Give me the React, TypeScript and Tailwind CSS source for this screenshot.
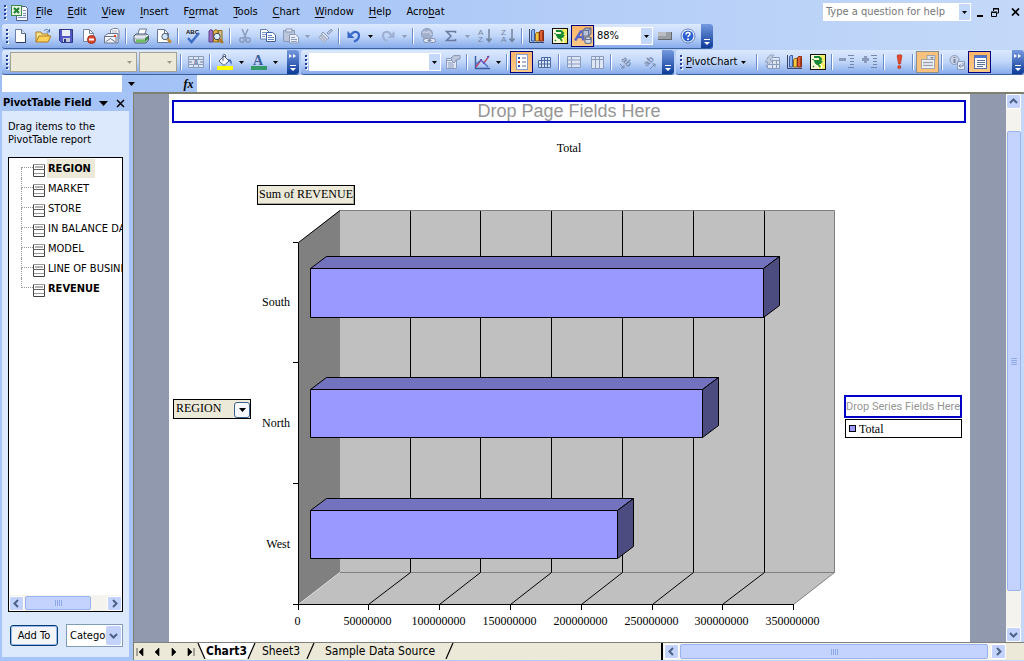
import type { ReactNode } from "react";
import clsx from "clsx";

/* ---------- small pieces ---------- */

function Svg({ children, size = 16 }: { children: ReactNode; size?: number }) {
  return (
    <svg width={size} height={size} viewBox="0 0 16 16" fill="none" aria-hidden="true">
      {children}
    </svg>
  );
}

function Caret({ className }: { className?: string }) {
  return (
    <svg width="5" height="3" viewBox="0 0 5 3" className={clsx("shrink-0", className)} aria-hidden="true">
      <path d="M0 0h5L2.5 3z" fill="currentColor" />
    </svg>
  );
}

function Chevron({ dir }: { dir: "up" | "down" | "left" | "right" }) {
  const paths = {
    up: "M1 6l3.500-3.500L8 6",
    down: "M1 3l3.500 3.500L8 3",
    left: "M6 1L2.500 4.500 6 8",
    right: "M3 1l3.500 3.500L3 8",
  };
  return (
    <svg width="9" height="9" viewBox="0 0 9 9" fill="none" aria-hidden="true">
      <path d={paths[dir]} stroke="#4d6185" strokeWidth="2" />
    </svg>
  );
}

function Grip() {
  return (
    <svg width="6" height="17" viewBox="0 0 6 17" className="ml-1 shrink-0" aria-hidden="true">
      {[1, 5, 9, 13].map((y) => (
        <g key={y}>
          <rect x="1" y={y + 1} width="2" height="2" fill="#fff" />
          <rect x="0" y={y} width="2" height="2" fill="#27419a" />
        </g>
      ))}
    </svg>
  );
}

function Sep() {
  return (
    <div className="flex w-1.5 shrink-0 justify-center">
      <div className="h-4 w-px bg-[#6a8ccb]" />
      <div className="h-4 w-px bg-white" />
    </div>
  );
}

function Tool({ label, active, soft, children }: { label: string; active?: boolean; soft?: boolean; children: ReactNode }) {
  return (
    <button
      aria-label={label}
      className={clsx(
        "flex h-[22px] w-[23px] shrink-0 items-center justify-center",
        active && "border border-[#000080] bg-linear-to-b from-[#fdb469] to-[#fdcb88]",
        soft && "border border-[#8d8d8d] bg-[#f8c27c]"
      )}
    >
      {children}
    </button>
  );
}

function Drop({ label, off }: { label: string; off?: boolean }) {
  return (
    <button
      aria-label={label}
      className={clsx("flex h-[22px] w-[11px] shrink-0 items-center justify-center", off ? "text-[#8d9bb8]" : "text-black")}
    >
      <Caret />
    </button>
  );
}

function Cap({ more }: { more?: boolean }) {
  return (
    <button
      aria-label="Toolbar options"
      className="flex h-full w-3 shrink-0 flex-col items-center justify-end rounded-r-[3px] bg-linear-to-b from-[#7599e0] to-[#0b3a97] pb-0.5"
    >
      <svg width="8" height="18" viewBox="0 0 8 18" aria-hidden="true">
        {more && <path d="M0 0l3 2-3 2zM4 0l3 2-3 2z" fill="#fff" />}
        <path d="M1 11h6v1H1zM1 14h6l-3 3z" fill="#fff" />
      </svg>
    </button>
  );
}

function Bar({ label, grow, children, more }: { label: string; grow?: boolean; children: ReactNode; more?: boolean }) {
  return (
    <div
      role="toolbar"
      aria-label={label}
      className={clsx(
        "flex h-[25px] items-center rounded-[3px] border-b border-[#3b619c] bg-linear-to-b from-[#dce9fe] via-[#c0d6f9] to-[#86aaea]",
        grow ? "min-w-0 flex-1" : "shrink-0"
      )}
    >
      <Grip />
      {children}
      <div className="flex-1" />
      <Cap more={more} />
    </div>
  );
}

function ScrollButton({ dir }: { dir: "up" | "down" | "left" | "right" }) {
  return (
    <button
      aria-label={`Scroll ${dir}`}
      className="flex size-[15px] shrink-0 items-center justify-center rounded-xs border border-white bg-[#c3d3fd]"
    >
      <Chevron dir={dir} />
    </button>
  );
}

function ThumbLines() {
  return (
    <div className="flex gap-px">
      {[0, 1, 2, 3].map((i) => (
        <div key={i} className="h-1.5 w-px bg-[#8faae8]" />
      ))}
    </div>
  );
}

/* ---------- toolbar icons ---------- */

const G = "#8b9bbd";

const NewIcon = () => (
  <Svg>
    <path d="M3.500 1.500h6l4 4v9h-10z" fill="#fff" stroke="#6b7ea8" />
    <path d="M13.500 6v8.500H4" stroke="#2d3e66" />
    <path d="M9.500 1.500v4h4" fill="#d7e3f8" stroke="#5a6c94" />
  </Svg>
);
const OpenIcon = () => (
  <Svg>
    <path d="M1 14V4h5l1 2h6v3" fill="#fbe48e" stroke="#ad7a1c" />
    <path d="M1 14l3-6h12l-3 6z" fill="#ffd158" stroke="#ad7a1c" />
    <path d="M9 3c2-2.500 4-2 5 .5M14.500 1v3h-3" stroke="#476fae" />
  </Svg>
);
const SaveIcon = () => (
  <Svg>
    <path d="M1.500 1.500h13v13h-11l-2-2z" fill="#5258c4" stroke="#2f378c" />
    <rect x="4" y="2" width="8" height="6" fill="#e9edf8" />
    <rect x="5" y="10" width="7" height="4" fill="#c7cbd9" />
    <rect x="6" y="11" width="2" height="3" fill="#27307e" />
  </Svg>
);
const PermissionIcon = () => (
  <Svg>
    <path d="M2.500 1.500h6l4 4v8h-10z" fill="#fff" stroke="#7585a9" />
    <path d="M8.500 1.500v4h4" stroke="#7585a9" />
    <circle cx="10.500" cy="11.500" r="4" fill="#d9472b" stroke="#a62c17" />
    <path d="M8 11.500h5" stroke="#fff" strokeWidth="2" />
  </Svg>
);
const MailIcon = () => (
  <Svg>
    <path d="M6.500 6V2l3-1.500h4l1.500 2V11" fill="#fff" stroke="#77839e" />
    <path d="M8 3h5M8 5h5" stroke="#a9b4cb" />
    <path d="M.5 8L4 5.500h10V15H.5z" fill="#f3f5fb" stroke="#6a7793" />
    <path d="M.5 8.500h11.500V15M1.500 14l5-3.500 5 3.500" stroke="#6a7793" />
    <rect x="10" y="7" width="2" height="2" fill="#d9472b" />
  </Svg>
);
const PrintIcon = () => (
  <Svg>
    <path d="M4.500 7l2-6h7l-2 6z" fill="#fff" stroke="#66789b" />
    <path d="M1 8l2-2h11l1.500 2v4L13 15H2l-1-2z" fill="#c5cbd7" stroke="#4b5872" />
    <path d="M1.500 9h11l2.500-2" stroke="#fff" />
    <path d="M3 11.500h9v3H3z" fill="#6dbf5f" />
    <path d="M12 10l3-2v3l-3 3z" fill="#3f8e46" />
  </Svg>
);
const PreviewIcon = () => (
  <Svg>
    <path d="M1.500 1.500h7l4 4v9h-11z" fill="#fff" stroke="#66789b" />
    <path d="M8.500 1.500v4h4" stroke="#66789b" />
    <circle cx="9" cy="8.500" r="3.200" fill="#cfe3fa" stroke="#565f73" />
    <path d="M11.500 11l3.500 3.500" stroke="#c28a34" strokeWidth="2.500" />
  </Svg>
);
const SpellIcon = () => (
  <Svg>
    <text x="1" y="6" fontSize="6" fontFamily="Liberation Sans, sans-serif" fontWeight="700" fill="#111">ABC</text>
    <path d="M3 10l3.500 4L14 5" stroke="#3f6fc4" strokeWidth="2.500" />
  </Svg>
);
const ResearchIcon = () => (
  <Svg>
    <path d="M1 3l2-1.500L5 3v11H1z" fill="#9a6fc0" stroke="#5f3f8a" />
    <path d="M5.500 3L8 1.500 10 3v11H5.500z" fill="#e3b750" stroke="#8d6a1d" />
    <path d="M10.500 2.500H14V14h-3.500z" fill="#d6c08d" stroke="#8d6a1d" />
    <circle cx="9" cy="8.500" r="3.200" fill="#dcecfb" stroke="#3b4a66" />
    <path d="M11.500 11l3.500 4" stroke="#b5741f" strokeWidth="2" />
  </Svg>
);
const CutIcon = () => (
  <Svg>
    <path d="M5 1l4 9M11 1l-4 9" stroke={G} strokeWidth="1.500" />
    <circle cx="5" cy="12" r="2.200" stroke={G} strokeWidth="1.500" />
    <circle cx="11" cy="12" r="2.200" stroke={G} strokeWidth="1.500" />
  </Svg>
);
const CopyIcon = () => (
  <Svg>
    <path d="M.5 1.500h6l2.500 2.500v7H.5z" fill="#fff" stroke="#5f7cb5" />
    <path d="M2 4.500h4M2 6.500h4M2 8.500h3" stroke="#7d98cb" />
    <path d="M6.500 4.500h6L15.500 7v6.500h-9z" fill="#fff" stroke="#3c5fa4" />
    <path d="M8 7.500h4M8 9.500h6M8 11.500h6" stroke="#6384c2" />
  </Svg>
);
const PasteIcon = () => (
  <Svg>
    <path d="M.5 2.500h11v11H.5z" fill="#bcc6da" stroke={G} />
    <rect x="3" y="1" width="6" height="3" fill="#dfe5f1" stroke={G} />
    <path d="M6.500 6.500h6l3 2.500v6h-9z" fill="#e9eef8" stroke={G} />
    <path d="M8 9.500h4M8 11.500h6M8 13.500h6" stroke={G} />
  </Svg>
);
const PainterIcon = () => (
  <Svg>
    <path d="M10 5l4-4 1.500 1.500-4 4z" fill="#b4bfd5" stroke={G} />
    <path d="M6 4l6 6-1.500 1.500L4.500 6z" fill="#dbe2ef" stroke={G} />
    <path d="M4.500 6L1 9.500 7 15l3.500-3.500z" fill="#a9b4ca" />
    <path d="M3 9l4 4M5 8l4 4" stroke="#d3dbea" />
  </Svg>
);
const UndoIcon = () => (
  <Svg>
    <path d="M5 6.500c3-4 8-3 8 1 0 3-2 5-5 6" stroke="#3668c9" strokeWidth="2.200" />
    <path d="M1.500 3v7h7z" fill="#3668c9" />
  </Svg>
);
const RedoIcon = () => (
  <Svg>
    <path d="M11 6.500c-3-4-8-3-8 1 0 3 1.500 4.500 4 5.500" stroke="#9fb0d2" strokeWidth="2.200" />
    <path d="M14.500 3v7h-7z" fill="#9fb0d2" />
  </Svg>
);
const LinkIcon = () => (
  <Svg>
    <circle cx="7" cy="6" r="5.500" fill="#a3b0cc" stroke={G} />
    <path d="M3 5c2-3 3 1 5-1s2 4 4 2" stroke="#c9d2e4" strokeWidth="1.500" />
    <rect x="3.500" y="10.500" width="6" height="4" rx="2" fill="#dde5f3" stroke="#7e8cab" />
    <rect x="9.500" y="10.500" width="6" height="4" rx="2" fill="#dde5f3" stroke="#7e8cab" />
    <path d="M7.500 12.500h4" stroke="#7e8cab" />
  </Svg>
);
const SumIcon = () => (
  <Svg>
    <path d="M12.500 5V3.500h-9L8 8l-4.500 4.500h9V11" stroke="#68789f" strokeWidth="1.500" />
  </Svg>
);
const SortIcon = ({ top, bottom }: { top: string; bottom: string }) => (
  <Svg>
    <text x="1" y="7" fontSize="8" fontFamily="Liberation Sans, sans-serif" fill="#74849f">{top}</text>
    <text x="1" y="14" fontSize="8" fontFamily="Liberation Sans, sans-serif" fill="#74849f">{bottom}</text>
    <path d="M12 1v12M9.500 10.500L12 13.500l2.500-3" stroke="#74849f" strokeWidth="1.500" />
  </Svg>
);
const ChartIcon = () => (
  <Svg>
    <path d="M.5 1v13.500H15" stroke="#3a4668" />
    <path d="M2.500 3l1-1.500h2V13h-3z" fill="#8fb4f0" stroke="#3a5fa8" />
    <path d="M6.500 6l1-1.500H10V13H6.500z" fill="#f7c640" stroke="#94691a" />
    <path d="M10.500 4l1-1.500h3V13h-4z" fill="#e0603a" stroke="#8a2c12" />
    <path d="M13.500 4v9" stroke="#a33b1c" />
  </Svg>
);
const MapIcon = () => (
  <Svg>
    <rect x=".5" y=".5" width="15" height="15" fill="#fbfbd8" stroke="#111" />
    <path d="M10 1h5v14H9l-1-5z" fill="#f4ee62" />
    <path d="M10 10l2 2-1 3M13 8l2 1" stroke="#fff" />
    <path d="M4 3h5l2 2-2 2H5l1 2h4l2-2" stroke="#148a35" strokeWidth="2" />
    <path d="M7 10v1M3 5v1M8 10l2 3M3 13l1-1" stroke="#148a35" strokeWidth="1.500" />
  </Svg>
);
const DrawingIcon = () => (
  <Svg size={18}>
    <path d="M1 12l5-8h2l0 8M3 9h5" stroke="#5b67c8" strokeWidth="2.200" />
    <path d="M8 3l2-2h5v5l-2 2H8z" fill="#b9c4dc" stroke="#65708f" />
    <path d="M8 3h5v5M13 3l2-2" stroke="#65708f" />
    <ellipse cx="12.500" cy="10" rx="2.800" ry="1.200" fill="#eef1f7" stroke="#65708f" />
    <path d="M9.700 10v3.500c0 1.500 5.600 1.500 5.600 0V10c0 1.500-5.600 1.500-5.600 0z" fill="#d4d9e6" stroke="#65708f" />
  </Svg>
);
const GrayRectIcon = () => (
  <svg width="14" height="8" viewBox="0 0 14 8" aria-hidden="true">
    <rect width="14" height="8" fill="#63676e" />
    <rect width="13" height="7" fill="#9a9ea5" />
    <rect width="8" height="4" fill="#b9bcc2" />
  </svg>
);
const HelpIcon = () => (
  <Svg>
    <circle cx="8" cy="8" r="7" fill="#fff" stroke="#5f7fc4" />
    <circle cx="8" cy="8" r="5.500" fill="#2e62d3" />
    <path d="M6 6.500c0-3 4-2.500 4-.5 0 1.500-2 1.500-2 3" stroke="#fff" strokeWidth="1.500" />
    <rect x="7" y="10.500" width="2" height="1.500" fill="#fff" />
  </Svg>
);
const MergeIcon = () => (
  <Svg>
    <path d="M.5 2.500h15v11H.5zM.5 5.500h15M.5 10.500h15M5.500 2.500v3M10.500 2.500v3M5.500 10.500v3M10.500 10.500v3" fill="#dfe6f3" stroke={G} />
    <text x="6" y="10" fontSize="7" fontFamily="Liberation Sans, sans-serif" fontWeight="700" fill="#68789f">a</text>
    <path d="M1 8h3M12 8h3" stroke="#68789f" />
  </Svg>
);
const FillIcon = () => (
  <Svg>
    <path d="M7 2l5 5-5 4.500L2 7z" fill="#f5f8fd" stroke="#4d5c7b" />
    <path d="M6 7V1.500c0-1.500 2.500-1.500 2.500 0V4" stroke="#4d5c7b" />
    <path d="M11 5c4 0 4 3 3.500 6-1-2-1-3-3-4" fill="#3d66bb" />
    <rect x="0" y="12" width="16" height="4" fill="#ffff00" />
  </Svg>
);
const FontColorIcon = () => (
  <Svg>
    <text x="2" y="11" fontSize="14" fontFamily="Liberation Serif, serif" fontWeight="700" fill="#3d5c9c">A</text>
    <rect x="0" y="12" width="16" height="4" fill="#339966" />
  </Svg>
);
const PropsIcon = () => (
  <Svg>
    <path d="M1.500 4.500h10v10h-10z" fill="#e1e8f4" stroke={G} />
    <path d="M1.500 6.500h10M3 9h5M3 11h6M3 13h6" stroke={G} />
    <path d="M6 4l3-2.500h6V5l-4 1-2 3-2-2z" fill="#bcc7db" stroke={G} />
  </Svg>
);
const LineTypeIcon = () => (
  <Svg>
    <path d="M1.500 2v12.500H16" stroke="#3a5ca4" strokeWidth="1.400" />
    <path d="M2 13l5-7 3 3 5-7" stroke="#c23b5e" strokeWidth="1.300" />
    <path d="M2 10l5-4 3 3 4 4" stroke="#4a70c9" strokeWidth="1.300" />
    <path d="M6 5h2v2H6zM9 8h2v2H9zM13 2h2v2h-2z" fill="#6a56c8" />
  </Svg>
);
const LegendIcon = () => (
  <Svg>
    <rect x="2.500" y=".5" width="11" height="15" fill="#fff" stroke="#8ba0cc" />
    <rect x="4" y="3" width="2" height="2" fill="#3158c4" />
    <rect x="4" y="7" width="2" height="2" fill="#c8372a" />
    <rect x="4" y="11" width="2" height="2" fill="#3158c4" />
    <path d="M8 4h4M8 8h4M8 12h4" stroke="#5a6d97" />
  </Svg>
);
const TableIcon = () => (
  <Svg>
    <path d="M4.500 3.500h9v10h-12v-7h12M1.500 10h12M4.500 3.500v10M7.500 3.500v10M10.500 3.500v10" fill="#dbe7fb" stroke="#4b68a6" />
  </Svg>
);
const RowsIcon = () => (
  <Svg>
    <path d="M1.500 2.500h13v11h-13zM1.500 6h13M1.500 10h13M5.500 2.500v11" fill="#dfe6f3" stroke={G} />
  </Svg>
);
const ColsIcon = () => (
  <Svg>
    <path d="M2.500 2.500h12v12h-12zM2.500 5.500h12M6.500 2.500v12M10.500 2.500v12" fill="#dfe6f3" stroke={G} />
  </Svg>
);
const AngleIcon = ({ up }: { up?: boolean }) => (
  <Svg>
    <g transform={up ? "rotate(-45 8 8)" : "rotate(45 8 8)"}>
      <text x="3" y="10" fontSize="9" fontFamily="Liberation Sans, sans-serif" fontWeight="700" fill="#7b8bad">ab</text>
    </g>
    <path d={up ? "M9 15l5-5M11 10h3v3" : "M2 10l4 4M6 11v3H3"} stroke="#7b8bad" />
  </Svg>
);
const FieldListIcon = () => (
  <Svg>
    <path d="M3.500 3.500h12v11h-12zM3.500 6.500h12M3.500 10.500h12M8.500 6.500v8M12.500 6.500v8" fill="#dfe6f3" stroke={G} />
    <path d="M6 1l4 0-4 5h3l-7 7 2-5H1z" fill="#c3cde0" stroke={G} strokeWidth=".8" />
  </Svg>
);
const HideDetailIcon = ({ plus }: { plus?: boolean }) => (
  <Svg>
    <path d="M9 1.500h6M11 4.500h4M11 7.500h4M11 10.500h4M9 13.500h6" stroke="#7686a8" />
    <path d="M0 4h7v3H0z" fill="#8b9bbd" />
    {plus && <path d="M2 2h3v7H2z" fill="#8b9bbd" />}
  </Svg>
);
const RefreshIcon = () => (
  <Svg>
    <path d="M6 1.500c1-1 4-1 5 0L9.500 10h-2z" fill="#e3482b" stroke="#a9301b" strokeWidth=".6" />
    <circle cx="8.300" cy="13" r="1.600" fill="#e3482b" stroke="#a9301b" strokeWidth=".6" />
  </Svg>
);
const HiddenItemsIcon = () => (
  <Svg>
    <path d="M1.500 5.500h13v9h-13z" fill="#f6f6f8" stroke="#9aa0ac" />
    <path d="M7 1.500h8v4H7z" fill="#dfe3ea" stroke="#9aa0ac" />
    <path d="M10 3h4l-2 2z" fill="#7c8598" />
    <path d="M3 8.500h10M3 11.500h10" stroke="#9aa3b6" strokeWidth="1.500" />
  </Svg>
);
const AlwaysIcon = () => (
  <Svg>
    <circle cx="5.500" cy="6" r="4.500" fill="#cbd4e6" stroke={G} />
    <path d="M5.500 5v4M5.500 3v1" stroke="#7686a8" strokeWidth="2" />
    <path d="M8.500 7.500h7v8h-7z" fill="#dfe6f3" stroke={G} />
    <path d="M14 9v3h-4M11.500 10.500L10 12l1.500 1.500" stroke="#7686a8" />
  </Svg>
);
const ListIcon = () => (
  <Svg>
    <rect x="2.500" y="1.500" width="12" height="13" fill="#fff" stroke="#5a6fa8" />
    <rect x="3" y="2" width="11" height="2" fill="#4a74cf" />
    <path d="M5 6.500h8M5 8.500h8M5 10.500h8M5 12.500h6" stroke="#5d6f9b" />
  </Svg>
);
const ExcelIcon = () => (
  <svg width="18" height="17" viewBox="0 0 18 17" className="ml-px" aria-hidden="true">
    <path d="M5.500 2.500h9l2 2v12h-11z" fill="#f4f7fd" stroke="#4f5f8a" />
    <path d="M7 13.500h8M12 6.500h3M12 9.500h3M12 11.500h3" stroke="#7b8fbc" />
    <rect x=".5" y="1.500" width="10" height="10" fill="#e4f3e2" stroke="#3f8a46" />
    <path d="M3 4l5 5M8 4L3 9" stroke="#1f7f2e" strokeWidth="2" />
  </svg>
);

/* ---------- menu ---------- */

// the middle part is the underlined access key
const MENUS = [
  ["", "F", "ile"],
  ["", "E", "dit"],
  ["", "V", "iew"],
  ["", "I", "nsert"],
  ["F", "o", "rmat"],
  ["", "T", "ools"],
  ["", "C", "hart"],
  ["", "W", "indow"],
  ["", "H", "elp"],
  ["Acro", "b", "at"],
];

function MenuBar() {
  return (
    <div className="flex h-6 items-center">
      <Grip />
      <ExcelIcon />
      <nav className="flex flex-1 gap-[15px] pl-[7px]">
        {MENUS.map(([pre, key, post]) => (
          <button key={pre + key + post} className="whitespace-nowrap">
            {pre}
            <span className="underline underline-offset-2">{key}</span>
            {post}
          </button>
        ))}
      </nav>
      <div className="flex h-[18px] w-[148px] items-center bg-white">
        <input
          aria-label="Type a question for help"
          placeholder="Type a question for help"
          className="min-w-0 flex-1 pl-[3px] text-[11px] outline-none placeholder:text-[#777]"
        />
        <button aria-label="Help history" className="mr-px flex h-4 w-[11px] items-center justify-center bg-[#c3d8fb]">
          <Caret />
        </button>
      </div>
      <div className="flex items-center gap-2 pr-1 pl-1.5">
        <button aria-label="Minimize">
          <svg width="6" height="10" viewBox="0 0 6 10"><path d="M0 8h6v2H0z" fill="#000" /></svg>
        </button>
        <button aria-label="Restore">
          <svg width="8" height="9" viewBox="0 0 8 9">
            <path d="M2.500 3V1h5v4H6M2 .500h6M.500 4.500h5v4h-5zM0 4h6" fill="none" stroke="#000" />
          </svg>
        </button>
        <button aria-label="Close" className="pl-1">
          <svg width="9" height="8" viewBox="0 0 9 8">
            <path d="M1 .5l7 7M8 .5l-7 7" stroke="#000" strokeWidth="1.700" />
          </svg>
        </button>
      </div>
    </div>
  );
}

/* ---------- toolbars ---------- */

function StandardBar() {
  return (
    <div className="flex px-0.5">
      <Bar label="Standard">
        <div className="mr-[-4px]" />
        <Tool label="New"><NewIcon /></Tool>
        <Tool label="Open"><OpenIcon /></Tool>
        <Tool label="Save"><SaveIcon /></Tool>
        <Tool label="Permission"><PermissionIcon /></Tool>
        <Tool label="E-mail"><MailIcon /></Tool>
        <Sep />
        <Tool label="Print"><PrintIcon /></Tool>
        <Tool label="Print preview"><PreviewIcon /></Tool>
        <Sep />
        <Tool label="Spelling"><SpellIcon /></Tool>
        <Tool label="Research"><ResearchIcon /></Tool>
        <Sep />
        <Tool label="Cut"><CutIcon /></Tool>
        <Tool label="Copy"><CopyIcon /></Tool>
        <Tool label="Paste"><PasteIcon /></Tool>
        <Drop label="Paste options" off />
        <Tool label="Format painter"><PainterIcon /></Tool>
        <Sep />
        <Tool label="Undo"><UndoIcon /></Tool>
        <Drop label="Undo list" />
        <Tool label="Redo"><RedoIcon /></Tool>
        <Drop label="Redo list" off />
        <Sep />
        <Tool label="Hyperlink"><LinkIcon /></Tool>
        <Tool label="AutoSum"><SumIcon /></Tool>
        <Drop label="AutoSum list" off />
        <Tool label="Sort ascending"><SortIcon top="A" bottom="Z" /></Tool>
        <Tool label="Sort descending"><SortIcon top="Z" bottom="A" /></Tool>
        <Sep />
        <Tool label="Chart wizard"><ChartIcon /></Tool>
        <Tool label="Map"><MapIcon /></Tool>
        <Tool label="Drawing" active><DrawingIcon /></Tool>
        <div className="ml-px flex h-[18px] w-[58px] items-center bg-white">
          <input aria-label="Zoom" defaultValue="88%" className="min-w-0 flex-1 pl-0.5 outline-none" />
          <button aria-label="Zoom list" className="mr-px flex h-4 w-[11px] items-center justify-center bg-[#c3d8fb]">
            <Caret />
          </button>
        </div>
        <Tool label="Shape"><GrayRectIcon /></Tool>
        <Tool label="Help"><HelpIcon /></Tool>
        <div className="w-0.5" />
      </Bar>
    </div>
  );
}

function DisabledCombo({ label, className }: { label: string; className: string }) {
  return (
    <div className={clsx("flex h-5 shrink-0 items-center border border-[#a5a395] bg-[#ece9d8]", className)}>
      <input aria-label={label} disabled className="min-w-0 flex-1" />
      <Caret className="mr-1 text-[#9c9a8c]" />
    </div>
  );
}

function ChartBars() {
  return (
    <div className="mt-px flex gap-0.5 pl-0.5">
      <Bar label="Formatting" more>
        <DisabledCombo label="Font" className="ml-[-2px] w-[127px]" />
        <DisabledCombo label="Font size" className="ml-0.5 w-[38px]" />
        <div className="w-px" />
        <Sep />
        <Tool label="Merge and center"><MergeIcon /></Tool>
        <Sep />
        <Tool label="Fill color"><FillIcon /></Tool>
        <Drop label="Fill colors" />
        <Tool label="Font color"><FontColorIcon /></Tool>
        <Drop label="Font colors" />
        <div className="w-1.5" />
      </Bar>
      <Bar label="Chart">
        <div className="ml-[-2px] flex h-[18px] w-[132px] items-center bg-white">
          <input aria-label="Chart objects" className="min-w-0 flex-1 outline-none" />
          <button aria-label="Chart object list" className="mr-px flex h-4 w-[11px] items-center justify-center bg-[#c3d8fb]">
            <Caret />
          </button>
        </div>
        <Tool label="Format object"><PropsIcon /></Tool>
        <Sep />
        <Tool label="Chart type"><LineTypeIcon /></Tool>
        <Drop label="Chart types" />
        <Sep />
        <Tool label="Legend" active><LegendIcon /></Tool>
        <Tool label="Data table"><TableIcon /></Tool>
        <Sep />
        <Tool label="By row"><RowsIcon /></Tool>
        <Tool label="By column"><ColsIcon /></Tool>
        <Sep />
        <Tool label="Angle clockwise"><AngleIcon /></Tool>
        <Tool label="Angle counterclockwise"><AngleIcon up /></Tool>
        <div className="w-0.5" />
      </Bar>
      <Bar label="PivotTable" grow more>
        <button className="flex w-[68px] items-center gap-1 whitespace-nowrap">
          <span><span className="underline underline-offset-2">P</span>ivotChart</span>
          <Caret />
        </button>
        <Sep />
        <Tool label="Format report"><FieldListIcon /></Tool>
        <Tool label="Chart wizard"><ChartIcon /></Tool>
        <Tool label="Map"><MapIcon /></Tool>
        <Sep />
        <Tool label="Hide detail"><HideDetailIcon /></Tool>
        <Tool label="Show detail"><HideDetailIcon plus /></Tool>
        <Sep />
        <Tool label="Refresh data"><RefreshIcon /></Tool>
        <Sep />
        <Tool label="Include hidden items" soft><HiddenItemsIcon /></Tool>
        <Sep />
        <Tool label="Always display items"><AlwaysIcon /></Tool>
        <Tool label="Field list" active><ListIcon /></Tool>
      </Bar>
    </div>
  );
}

function FormulaBar() {
  return (
    <div className="flex h-[17px] pl-0.5">
      <input aria-label="Name box" className="w-[120px] bg-white outline-none" />
      <button aria-label="Names" className="flex w-[18px] items-center justify-center">
        <svg width="7" height="4" viewBox="0 0 7 4"><path d="M0 0h7L3.500 4z" /></svg>
      </button>
      <button
        aria-label="Insert function"
        className="ml-10 w-[17px] font-['Liberation_Serif',serif] text-[12px] leading-4 font-bold italic"
      >
        fx
      </button>
      <input aria-label="Formula" className="min-w-0 flex-1 bg-white outline-none" />
    </div>
  );
}

/* ---------- field list ---------- */

const FIELDS = [
  { name: "REGION", used: true, selected: true },
  { name: "MARKET" },
  { name: "STORE" },
  { name: "IN BALANCE DATE" },
  { name: "MODEL" },
  { name: "LINE OF BUSINESS" },
  { name: "REVENUE", used: true },
];

function FieldIcon() {
  return (
    <svg width="12" height="13" viewBox="0 0 12 13" className="mt-1.5 shrink-0" aria-hidden="true">
      <path d="M.5 0v12.500h11V0" fill="#fff" stroke="#444" />
      <path d="M0 .5h12M1 9.500h10" stroke="#999" />
      <path d="M2 3h8" stroke="#b5b5b5" strokeWidth="2" />
      <path d="M0 5.500h12" stroke="#666" />
    </svg>
  );
}

function FieldList() {
  return (
    <aside className="flex w-[133px] shrink-0 flex-col bg-[#a6c4f8] pr-1 pb-1 pl-0.5">
      <div className="mt-[3px] flex h-4 items-center bg-[#a5c3f6] pl-px text-[11px] font-bold">
        <h2 className="whitespace-nowrap">PivotTable Field</h2>
        <button aria-label="Pane menu" className="ml-auto">
          <svg width="9" height="5" viewBox="0 0 9 5"><path d="M0 0h9L4.500 5z" /></svg>
        </button>
        <button aria-label="Close pane" className="mr-1 ml-2">
          <svg width="9" height="9" viewBox="0 0 9 9"><path d="M1 1l7 7M8 1L1 8" stroke="#000" strokeWidth="1.500" /></svg>
        </button>
      </div>
      <div className="flex min-h-0 flex-1 flex-col bg-[#dce8fc] px-1.5 pt-[9px] pb-2.5">
        <p className="leading-[13px] whitespace-nowrap">
          Drag items to the
          <br />
          PivotTable report
        </p>
        <div className="mt-[11px] flex min-h-0 flex-1 flex-col border border-black bg-white">
          <ul className="min-h-0 flex-1 overflow-hidden">
            {FIELDS.map((f, i) => (
              <li key={f.name} className="flex h-5">
                <div className="ml-3 flex w-3 shrink-0 flex-col">
                  <div className={clsx("h-2.5 border-b border-dotted border-b-[#999]", i > 0 && "border-l border-l-[#999]")} />
                  <div className={clsx("h-2.5", i < FIELDS.length - 1 && "border-l border-dotted border-[#999]")} />
                </div>
                <div className="flex">
                  <FieldIcon />
                  <span
                    className={clsx(
                      "mt-px ml-0.5 h-[19px] pr-1 pl-px leading-[19px] whitespace-nowrap",
                      f.used && "font-bold",
                      f.selected && "bg-[#ece9d8]"
                    )}
                  >
                    {f.name}
                  </span>
                </div>
              </li>
            ))}
          </ul>
          <div className="flex h-4 items-center bg-[#f4f3ee]">
            <ScrollButton dir="left" />
            <div className="mx-px flex h-[14px] w-[66px] items-center justify-center rounded-xs border border-[#98b3ee] bg-[#c3d3fd]">
              <ThumbLines />
            </div>
            <div className="flex-1" />
            <ScrollButton dir="right" />
          </div>
        </div>
        <div className="mt-3 flex items-center justify-between pl-0.5">
          <button className="h-[21px] w-12 rounded-[3px] border border-[#003c74] bg-[#f3f4f7] leading-4 whitespace-nowrap shadow-[inset_0_0_0_1px_#9db9ea]">
            Add To
          </button>
          <div className="flex h-[23px] w-[57px] items-center border border-[#7f9db9] bg-white">
            <select aria-label="Area" className="h-full min-w-0 flex-1 appearance-none pl-[3px] outline-none">
              <option>Category Axis</option>
              <option>Series Axis</option>
              <option>Page Area</option>
              <option>Data Area</option>
            </select>
            <div className="mr-px flex h-[19px] w-[15px] items-center justify-center rounded-xs bg-[#c3d3fd]">
              <Chevron dir="down" />
            </div>
          </div>
        </div>
      </div>
    </aside>
  );
}

/* ---------- chart ---------- */

const AXIS = [0, 50000000, 100000000, 150000000, 200000000, 250000000, 300000000, 350000000];
const BARS = [
  { name: "South", x: 763, y: 268, h: 49 },
  { name: "North", x: 702, y: 389, h: 48 },
  { name: "West", x: 617, y: 510, h: 48 },
];

const tickX = (i: number) => Math.floor(298 + i * 70.8) + 0.5;
const wallX = (i: number) => Math.floor(339.3 + i * 70.8) + 0.5;

function RevenueChart() {
  return (
    <svg
      viewBox="251 205 593 430"
      className="h-auto min-w-0 flex-1"
      role="img"
      aria-label="Sum of revenue by region"
      fontFamily="'Liberation Serif', serif"
      fontSize="12"
    >
      {/* walls and floor */}
      <path d="M298.500 242.500L340 210v362l-41.500 32z" fill="#808080" />
      <path d="M340 210.500h494.500v362H340z" fill="#c0c0c0" />
      <path d="M298.500 604.500L340 572.500h494.500l-41 32z" fill="#c0c0c0" />
      <path d="M340 210.500h494.500v362H340M834.500 572.500l-41 32" fill="none" stroke="#808080" />
      {AXIS.slice(1, 7).map((v, i) => (
        <path key={v} d={`M${wallX(i + 1)} 211v361.500L${tickX(i + 1)} 604.500`} fill="none" stroke="#000" />
      ))}
      <path d="M340 210.500l-41.500 32v362h495" fill="none" stroke="#000" />
      {[242.5, 362.5, 483.5, 604.5].map((y) => (
        <path key={y} d={`M293 ${y}h5`} stroke="#000" />
      ))}
      {AXIS.map((v, i) => (
        <g key={v}>
          <path d={`M${tickX(i)} 604v6`} stroke="#000" />
          <text x={tickX(i) - 1} y="625" textAnchor="middle">{v}</text>
        </g>
      ))}
      {BARS.map(({ name, x, y, h }) => (
        <g key={name} stroke="#000" strokeLinejoin="round">
          <path d={`M310.500 ${y + 0.5}l16-12H${x + 16.5}l-16 12z`} fill="#7272bf" />
          <path d={`M${x + 0.5} ${y + 0.5}l16-12v${h}l-16 12z`} fill="#4c4c80" />
          <path d={`M310.500 ${y + 0.5}H${x + 0.5}v${h}H310.500z`} fill="#9999ff" />
          <text x="290" y={y + 38} textAnchor="end" stroke="none">{name}</text>
        </g>
      ))}
    </svg>
  );
}

function ChartSheet() {
  return (
    <div className="flex min-w-0 flex-1 flex-col overflow-hidden bg-white pt-1.5 pr-1 pl-[3px] font-['Liberation_Serif',serif] text-[12px]">
      <div className="h-[23px] shrink-0 border-2 border-[#0000c8] text-center font-['Liberation_Sans',sans-serif] text-[18px] leading-[18px] text-[#969696]">
        Drop Page Fields Here
      </div>
      <h1 className="mt-[17px] text-center leading-4">Total</h1>
      <button className="mt-[29px] ml-[85px] h-5 w-[98px] shrink-0 border border-black bg-[#ece9d8] pb-0.5 leading-4 whitespace-nowrap shadow-[inset_-1px_-1px_0_#aca899]">
        Sum of REVENUE
      </button>
      <div className="flex items-start pr-1 pl-px">
        <button className="mt-[194px] flex h-5 w-[78px] shrink-0 items-start justify-between border border-black bg-[#ece9d8] pl-0.5 leading-4">
          REGION
          <span className="flex size-4 items-center justify-center self-end rounded-[3px] border border-[#3d6192] bg-[#f5f7fb]">
            <svg width="7" height="4" viewBox="0 0 7 4"><path d="M0 0h7L3.500 4z" /></svg>
          </span>
        </button>
        <RevenueChart />
        <div className="mt-[190px] w-[118px] shrink-0">
          <div className="flex h-[23px] justify-center border-2 border-[#0000c8] font-[Roboto,sans-serif] text-[11px] leading-[19px] whitespace-nowrap text-[#969696]">
            Drop Series Fields Here
          </div>
          <div className="mt-px ml-px flex h-[19px] items-center gap-[3px] border border-black pl-[3px]">
            <div className="size-[7px] border border-black bg-[#9999ff]" />
            Total
          </div>
        </div>
      </div>
    </div>
  );
}

/* ---------- sheet tabs ---------- */

function Slant({ flip, white }: { flip?: boolean; white?: boolean }) {
  return (
    <svg width="9" height="16" viewBox="0 0 9 16" className="shrink-0" aria-hidden="true">
      {white && <path d={flip ? "M0 0h1l7 16h1V0z" : "M0 0h8L1 16H0z"} fill="#fff" />}
      <path d={flip ? "M1 0l7 16" : "M8 0L1 16"} stroke="#000" strokeWidth="1.200" />
    </svg>
  );
}

const NAV = [
  { label: "First sheet", d: "M1 0v8M7 0v8L3 4z" },
  { label: "Previous sheet", d: "M6 0v8L2 4z" },
  { label: "Next sheet", d: "M2 0v8l4-4z" },
  { label: "Last sheet", d: "M1 0v8l4-4zM7 0v8" },
];

function TabBar() {
  return (
    <div className="flex h-[18px] shrink-0 items-center border-t border-[#808080] bg-[#ece9d8] pr-[18px]">
      <div className="flex gap-[9px] pr-0.5 pl-0.5">
        {NAV.map((n) => (
          <button key={n.label} aria-label={n.label}>
            <svg width="8" height="8" viewBox="0 0 8 8"><path d={n.d} stroke="#000" strokeWidth=".6" /></svg>
          </button>
        ))}
      </div>
      <div className="flex h-4 items-center self-start text-[12px] leading-4 whitespace-nowrap">
        <Slant flip white />
        <button className="bg-white font-bold">Chart3</button>
        <Slant white />
        <button className="px-1.5">Sheet3</button>
        <Slant />
        <button className="px-2.5">Sample Data Source</button>
        <Slant />
      </div>
      <div className="flex-1" />
      <div className="flex h-full w-[345px] items-center border-l-2 border-black bg-[#f4f3ee] pl-px">
        <ScrollButton dir="left" />
        <div className="mx-px flex h-[15px] flex-1 items-center justify-center rounded-xs border border-[#98b3ee] bg-[#c3d3fd]">
          <ThumbLines />
        </div>
        <div className="w-0.5" />
        <ScrollButton dir="right" />
      </div>
    </div>
  );
}

export default function App() {
  return (
    <div className="flex h-screen flex-col overflow-hidden bg-linear-to-r from-[#9ebef5] to-[#c4d9f9] font-['DejaVu_Sans_Condensed','DejaVu_Sans',sans-serif] text-[11px] leading-4 text-black">
      <MenuBar />
      <StandardBar />
      <ChartBars />
      <FormulaBar />
      <div className="flex min-h-0 flex-1">
        <FieldList />
        <main className="mb-px flex min-w-0 flex-1 flex-col border-t-2 border-l border-[#808070]">
          <div className="flex min-h-0 flex-1">
            <div className="w-[35px] shrink-0 bg-[#9199ae]" />
            <ChartSheet />
            <div className="w-9 shrink-0 bg-[#9199ae]" />
            <div className="mr-[3px] flex w-[15px] shrink-0 flex-col items-center bg-[#f4f3ee]">
              <ScrollButton dir="up" />
              <div className="mt-[22px] flex w-[14px] flex-1 flex-col items-center justify-center gap-px rounded-xs border border-[#98b3ee] bg-[#c3d3fd]">
                {[0, 1, 2, 3].map((i) => (
                  <div key={i} className="h-px w-1.5 bg-[#8faae8]" />
                ))}
              </div>
              <div className="h-9 shrink-0" />
              <ScrollButton dir="down" />
            </div>
          </div>
          <TabBar />
        </main>
      </div>
    </div>
  );
}
